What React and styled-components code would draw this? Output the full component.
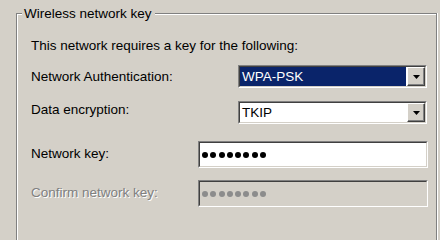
import React from "react";
import styled, { createGlobalStyle } from "styled-components";

const GlobalStyle = createGlobalStyle`
  html, body {
    margin: 0;
    overflow: hidden;
    background: #d4d0c8;
  }
  body {
    font-family: "Liberation Sans", Arial, sans-serif;
    font-size: 13.5px;
    color: #000;
  }
`;

const Page = styled.div`
  width: 440px;
  height: 100vh;
  display: flex;
  flex-direction: column;
  padding: 13px 0 0 16px;
  box-sizing: border-box;
  background: #d4d0c8;
`;

const GroupBox = styled.div`
  position: relative;
  flex: 1;
  width: 421px;
  box-sizing: border-box;
  border-style: solid;
  border-color: #808080;
  border-width: 1px 1px 0 1px;
  box-shadow: inset 1px 1px 0 #fff, 1px 0 0 #fff;
  padding: 24px 0 0 14px;
`;

const Legend = styled.div`
  position: absolute;
  top: -8px;
  left: 5px;
  padding: 0 3px 0 2px;
  line-height: 15px;
  background: #d4d0c8;
`;

const Intro = styled.div`
  line-height: 16px;
  margin-bottom: 11px;
`;

const Row = styled.div`
  display: flex;
  align-items: center;
  height: ${props => props.$height}px;
  margin-bottom: ${props => props.$gap || 0}px;
`;

const Label = styled.div`
  flex: 0 0 ${props => props.$width}px;
  line-height: 16px;
  margin-top: ${props => props.$shift || 0}px;
  color: ${props => (props.$disabled ? "#808080" : "#000")};
  text-shadow: ${props => (props.$disabled ? "1px 1px 0 #fff" : "none")};
`;

const Sunken = styled.div`
  box-sizing: border-box;
  height: 100%;
  border-style: solid;
  border-width: 1px;
  border-color: #808080 #fff #fff #808080;
`;

const SunkenInner = styled.div`
  box-sizing: border-box;
  height: 100%;
  display: flex;
  align-items: center;
  border-style: solid;
  border-width: 1px;
  border-color: #404040 #d4d0c8 #d4d0c8 #404040;
  background: ${props => (props.$disabled ? "#d4d0c8" : "#fff")};
`;

const Combo = styled(Sunken)`
  width: 189px;
`;

const ComboValue = styled.div`
  flex: 1;
  height: 100%;
  display: flex;
  align-items: center;
  padding-left: 2px;
  line-height: 16px;
  background: ${props => (props.$selected ? "#0a246a" : "transparent")};
  color: ${props => (props.$selected ? "#fff" : "#000")};
  margin-right: 1px;
`;

const DropButton = styled.div`
  flex: 0 0 18px;
  height: 100%;
  box-sizing: border-box;
  display: flex;
  align-items: center;
  justify-content: center;
  background: #d4d0c8;
  border-style: solid;
  border-width: 1px;
  border-color: #fff #404040 #404040 #fff;
  box-shadow: inset -1px -1px 0 #808080;
`;

const TextBox = styled(Sunken)`
  width: 230px;
`;

const Dots = styled.div`
  display: flex;
  gap: 2.3px;
  padding-left: 2px;
`;

const Dot = styled.span`
  width: 6px;
  height: 6px;
  border-radius: 50%;
  background: ${props => (props.$disabled ? "#8c8c8c" : "#000")};
`;

const Arrow = () => (
  <svg width="7" height="4" viewBox="0 0 7 4">
    <polygon points="0,0 7,0 3.5,4" fill="#000" />
  </svg>
);

const ComboBox = ({ value, selected }) => (
  <Combo>
    <SunkenInner>
      <ComboValue $selected={selected}>{value}</ComboValue>
      <DropButton>
        <Arrow />
      </DropButton>
    </SunkenInner>
  </Combo>
);

const PasswordBox = ({ disabled }) => (
  <TextBox>
    <SunkenInner $disabled={disabled}>
      <Dots>
        {[...Array(8)].map((e, i) => (
          <Dot key={i} $disabled={disabled} />
        ))}
      </Dots>
    </SunkenInner>
  </TextBox>
);

export default function App() {
  return (
    <>
      <GlobalStyle />
      <Page>
        <GroupBox>
          <Legend>Wireless network key</Legend>
          <Intro>This network requires a key for the following:</Intro>
          <Row $height={23} $gap={13}>
            <Label $width={207}>Network Authentication:</Label>
            <ComboBox value="WPA-PSK" selected />
          </Row>
          <Row $height={23} $gap={17}>
            <Label $width={207} $shift={-5}>Data encryption:</Label>
            <ComboBox value="TKIP" />
          </Row>
          <Row $height={27} $gap={12}>
            <Label $width={167} $shift={-2}>Network key:</Label>
            <PasswordBox />
          </Row>
          <Row $height={27}>
            <Label $width={167} $shift={-1} $disabled>
              Confirm network key:
            </Label>
            <PasswordBox disabled />
          </Row>
        </GroupBox>
      </Page>
    </>
  );
}
